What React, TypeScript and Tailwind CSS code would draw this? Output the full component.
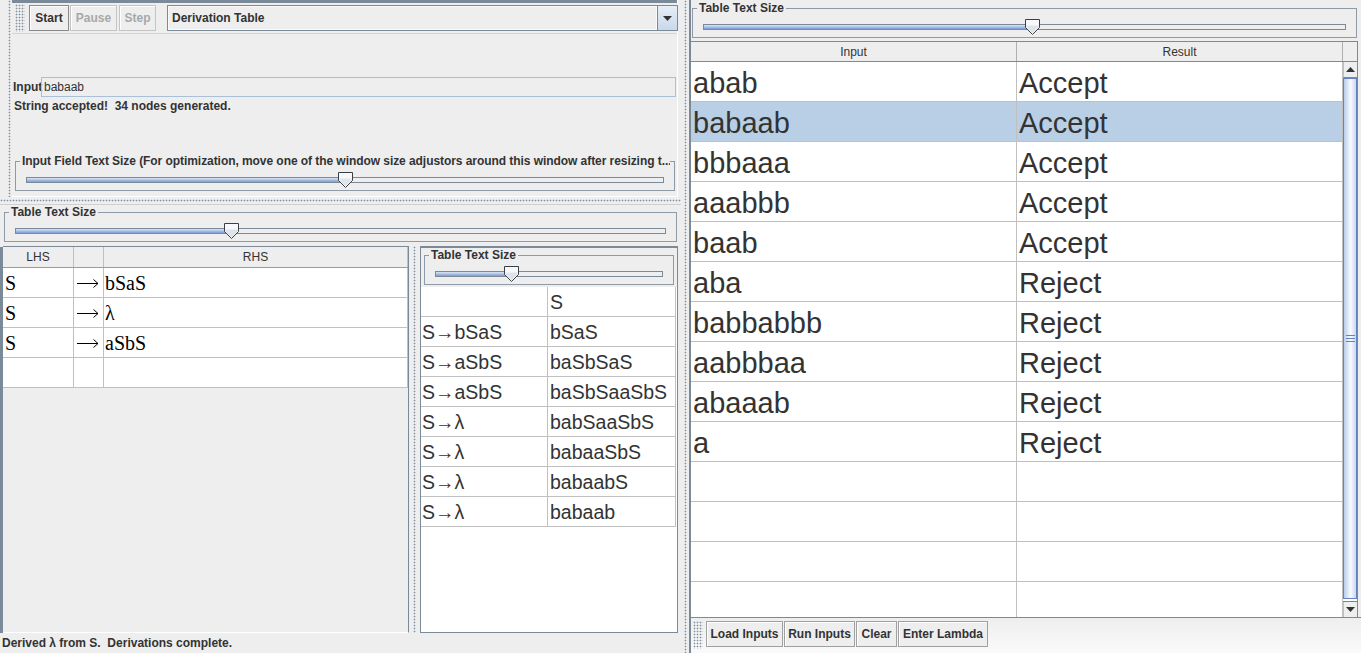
import React from 'react';

const dots = 'bg-[radial-gradient(circle_at_center,#7f8fa0_0.75px,transparent_1.1px)] bg-[length:3px_3px]';

const Thumb: React.FC<{ left: number }> = ({ left }) => (
  <svg className="absolute top-[-6px]" style={{ left }} width="15" height="16" viewBox="0 0 15 16">
    <path d="M0.5 0.5 H14.5 V8.5 L7.5 15.5 L0.5 8.5 Z" fill="#f6f8fa" stroke="#3a3f45" />
    <path d="M1.5 6.5 H13.5 V8.2 L7.5 14.2 L1.5 8.2 Z" fill="#dfe4ea" />
  </svg>
);

const Slider: React.FC<{ thumb: number }> = ({ thumb }) => (
  <div className="relative h-[6px] border border-[#7a8a99] bg-[#eeeeee]">
    <div className="h-full bg-gradient-to-b from-[#dbe6f4] to-[#7e9bd4]" style={{ width: thumb }} />
    <Thumb left={thumb - 1} />
  </div>
);

const Group: React.FC<{ title: string; thumb: number; className?: string; legendClass?: string }> = ({
  title,
  thumb,
  className,
  legendClass,
}) => (
  <fieldset className={`min-w-0 border border-[#8e9aa6] ${className ?? ''}`}>
    <legend
      className={`ml-[4px] px-[2px] text-[12px] leading-[14px] font-bold text-[#333] whitespace-nowrap overflow-hidden ${legendClass ?? ''}`}
    >
      {title}
    </legend>
    <div className="pt-[9px] pb-[7px] pl-[10px] pr-[10px]">
      <Slider thumb={thumb} />
    </div>
  </fieldset>
);

const VDots: React.FC = () => <div className={`w-[3px] h-full ${dots}`} />;

const ToolButton: React.FC<{ label: string; disabled?: boolean; className: string }> = ({ label, disabled, className }) => (
  <div
    className={`h-[26px] shrink-0 flex items-center justify-center text-[12px] font-bold border bg-[#eeeeee] shadow-[inset_1px_1px_0_#ffffff] ${
      disabled ? 'border-[#c4c4c4] text-[#a8a8a8]' : 'border-[#8a8a8a] text-[#333]'
    } ${className}`}
  >
    {label}
  </div>
);

const Tri: React.FC<{ up?: boolean }> = ({ up }) => (
  <svg width="9" height="5" viewBox="0 0 9 5">
    <path d={up ? 'M0 5H9L4.5 0Z' : 'M0 0H9L4.5 5Z'} fill="#333" />
  </svg>
);

// long production arrow drawn in the grammar table
const LongArrow: React.FC = () => (
  <svg width="22" height="10" viewBox="0 0 22 10" aria-label="→">
    <path d="M0 5.5H21" stroke="#000" strokeWidth="1" />
    <path d="M16.5 1.5L21 5.5L16.5 9.5" stroke="#000" strokeWidth="1" fill="none" />
  </svg>
);

const grammar = [
  ['S', 'bSaS'],
  ['S', 'λ'],
  ['S', 'aSbS'],
  ['', ''],
];

const derivations = [
  ['', 'S'],
  ['S→bSaS', 'bSaS'],
  ['S→aSbS', 'baSbSaS'],
  ['S→aSbS', 'baSbSaaSbS'],
  ['S→λ', 'babSaaSbS'],
  ['S→λ', 'babaaSbS'],
  ['S→λ', 'babaabS'],
  ['S→λ', 'babaab'],
];

const results = [
  ['abab', 'Accept'],
  ['babaab', 'Accept'],
  ['bbbaaa', 'Accept'],
  ['aaabbb', 'Accept'],
  ['baab', 'Accept'],
  ['aba', 'Reject'],
  ['babbabbb', 'Reject'],
  ['aabbbaa', 'Reject'],
  ['abaaab', 'Reject'],
  ['a', 'Reject'],
  ['', ''],
  ['', ''],
  ['', ''],
  ['', ''],
];

const App: React.FC = () => {
  return (
    <div className="w-[1361px] h-[653px] overflow-hidden flex bg-[#eeeeee] text-[#333] font-['Liberation_Sans',Arial,sans-serif]">
      {/* Left side: controls, grammar and derivation */}
      <div className="w-[681px] shrink-0 flex flex-col">
        <div className="h-[197px] flex">
          <div className="w-[12px] shrink-0 flex justify-end pr-[1px]">
            <VDots />
          </div>
          <div className="w-[666px] shrink-0 min-w-0 flex flex-col border-r border-b border-white">
            <div className="h-[3px] bg-[#7a8a99]" />
            <div className="h-[31px] flex items-center border-b border-[#d4d4d4]">
              <div className={`ml-[3px] w-[10px] h-[28px] shrink-0 ${dots}`} />
              <ToolButton label="Start" className="ml-[4px] w-[40px]" />
              <ToolButton label="Pause" disabled className="ml-[1px] w-[47px]" />
              <ToolButton label="Step" disabled className="ml-[2px] w-[37px]" />
              <div className="ml-[11px] w-[511px] shrink-0 h-[26px] flex border border-[#7a8a99] bg-[#eeeeee]">
                <div className="flex-1 flex items-center pl-[3px] text-[12px] font-bold border border-[#fafafa]">Derivation Table</div>
                <div className="w-[20px] flex items-center justify-center border-l border-[#7a8a99] bg-gradient-to-b from-[#e6eef7] to-[#c9d8ea]">
                  <Tri />
                </div>
              </div>
            </div>
            <div className="mt-[43px] h-[20px] flex items-center pl-[1px] pr-[1px]">
              <span className="text-[12px] font-bold w-[28px] shrink-0">Input</span>
              <div className="flex-1 h-[20px] flex items-center border border-[#a9c0d8] pl-[2px] text-[12px]">babaab</div>
            </div>
            <div className="mt-[2px] pl-[2px] text-[12px] leading-[14px] font-bold whitespace-pre">String accepted!  34 nodes generated.</div>
            <Group
              className="mt-[41px] ml-[3px] mr-[2px]"
              legendClass="max-w-[650px] tracking-[-0.06px]"
              title="Input Field Text Size (For optimization, move one of the window size adjustors around this window after resizing t..."
              thumb={312}
            />
          </div>
        </div>

        <div className="h-[8px] flex items-center border-b border-[#d0d0d0]">
          <div className={`h-[3px] w-full ${dots}`} />
        </div>

        <Group className="ml-[4px] mr-[4px]" title="Table Text Size" thumb={209} />

        <div className="mt-[4px] h-[387px] flex">
          <div className="w-[3px] bg-[#7a8a99] mt-[1px]" />
          {/* grammar table */}
          <div className="w-[406px] flex flex-col border-t border-r border-b border-[#7a8a99] border-b-white">
            <div className="h-[21px] flex border-b border-[#9a9a9a] text-[12px]">
              <div className="w-[71px] flex items-center justify-center border-r border-[#c0c0c0]">LHS</div>
              <div className="w-[30px] border-r border-[#c0c0c0]" />
              <div className="w-[304px] flex items-center justify-center border-r border-[#c0c0c0]">RHS</div>
            </div>
            {grammar.map((r, i) => (
              <div key={i} className="h-[30px] flex font-['Liberation_Serif','DejaVu_Serif',serif] text-[20px] text-black">
                <div className="w-[71px] flex items-center pl-[2px] bg-white border-r border-b border-[#c0c0c0]">{r[0]}</div>
                <div className="w-[30px] flex items-center pl-[3px] bg-white border-r border-b border-[#c0c0c0]">{r[0] ? <LongArrow /> : null}</div>
                <div className="w-[304px] flex items-center pl-[1px] bg-white border-r border-b border-[#c0c0c0]">{r[1]}</div>
              </div>
            ))}
          </div>
          <div className="w-[11px] flex justify-center">
            <VDots />
          </div>
          {/* derivation table */}
          <div className="w-[258px] flex flex-col border border-[#7a8a99] border-t-2">
            <Group className="ml-[3px] mr-[3px]" title="Table Text Size" thumb={69} />
            <div className="mt-[2px] flex-1 bg-white">
              {derivations.map((r, i) => (
                <div key={i} className="h-[30px] flex text-[19.5px]">
                  <div className="w-[127px] flex items-center pl-[1px] pt-[2px] border-r border-b border-[#c0c0c0]">{r[0]}</div>
                  <div className="w-[128px] flex items-center pl-[2px] pt-[2px] border-r border-b border-[#c0c0c0]">{r[1]}</div>
                </div>
              ))}
            </div>
          </div>
        </div>

        <div className="h-[20px] flex items-center pl-[2px] text-[12px] font-bold whitespace-pre">Derived λ from S.  Derivations complete.</div>
      </div>

      {/* main split divider */}
      <div className="w-[8px] shrink-0 flex justify-center">
        <VDots />
      </div>

      {/* Right side: multiple run table */}
      <div className="w-[672px] shrink-0 flex flex-col border-l-2 border-[#7a8a99]">
        <Group className="mt-[1px] ml-[1px] mr-[4px]" title="Table Text Size" thumb={322} />
        <div className="mt-[3px] h-[576px] flex mr-[3px] border-t border-[#7a8a99]">
          <div className="w-[652px] flex flex-col">
            <div className="h-[20px] flex border-b border-[#7a8a99] text-[12px]">
              <div className="w-[326px] flex items-center justify-center border-r border-[#b0b0b0]">Input</div>
              <div className="w-[326px] flex items-center justify-center border-r border-[#b0b0b0]">Result</div>
            </div>
            <div className="flex-1 overflow-hidden bg-white">
              {results.map((r, i) => (
                <div key={i} className={`h-[40px] flex text-[29px] ${i === 1 ? 'bg-[#b8cfe5]' : ''}`}>
                  <div className="w-[326px] flex items-center pl-[2px] pt-[4px] border-r border-b border-[#c0c0c0]">{r[0]}</div>
                  <div className="w-[326px] flex items-center pl-[2px] pt-[4px] border-r border-b border-[#c0c0c0]">{r[1]}</div>
                </div>
              ))}
            </div>
          </div>
          {/* scrollbar */}
          <div className="w-[15px] flex flex-col border-r border-[#7a8a99]">
            <div className="h-[20px] border-b border-[#7a8a99] bg-[#eeeeee]" />
            <div className="h-[16px] flex items-center justify-center bg-[#eeeeee] border-b border-[#7a8a99] border-l border-l-[#c0c0c0]">
              <Tri up />
            </div>
            <div className="flex-1 flex items-center justify-center border border-[#6382bf] bg-[linear-gradient(90deg,#b9cde9,#f8fbff_55%,#c8d8ee)]">
              <div className="flex flex-col gap-[2px]">
                <div className="w-[9px] h-px bg-[#6382bf]" />
                <div className="w-[9px] h-px bg-[#6382bf]" />
                <div className="w-[9px] h-px bg-[#6382bf]" />
              </div>
            </div>
            <div className="h-[3px] bg-white border-b border-[#6382bf]" />
            <div className="h-[15px] flex items-center justify-center bg-[#eeeeee] border-l border-[#c0c0c0]">
              <Tri />
            </div>
          </div>
        </div>
        <div className="flex-1 flex items-start pt-[3px] border-t border-[#7a8a99] bg-gradient-to-b from-[#eeeeee] to-[#fafafa]">
          <div className={`ml-[2px] w-[10px] h-[28px] ${dots}`} />
          <ToolButton label="Load Inputs" className="ml-[3px] w-[77px] border-[#a0a0a0]" />
          <ToolButton label="Run Inputs" className="ml-[1px] w-[71px] border-[#a0a0a0]" />
          <ToolButton label="Clear" className="ml-[1px] w-[41px] border-[#a0a0a0]" />
          <ToolButton label="Enter Lambda" className="ml-[1px] w-[90px] border-[#a0a0a0]" />
        </div>
      </div>
    </div>
  );
};

export default App;
